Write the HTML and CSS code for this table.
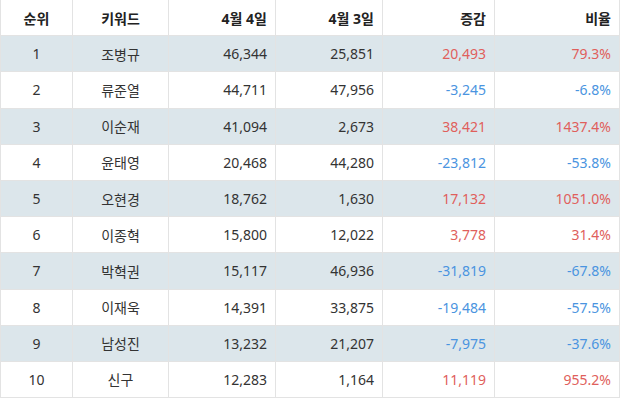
FILE: index.html
```html
<!DOCTYPE html>
<html lang="ko">
<head>
<meta charset="utf-8">
<link rel="stylesheet" href="styles.css">
</head>
<body>
<div class="table">
  <div class="row head">
    <div class="c c1">순위</div><div class="c c2">키워드</div><div class="c r">4월 4일</div><div class="c r">4월 3일</div><div class="c r">증감</div><div class="c r">비율</div>
  </div>
  <div class="row band">
    <div class="c c1">1</div><div class="c c2">조병규</div><div class="c r">46,344</div><div class="c r">25,851</div><div class="c r up">20,493</div><div class="c r up">79.3%</div>
  </div>
  <div class="row">
    <div class="c c1">2</div><div class="c c2">류준열</div><div class="c r">44,711</div><div class="c r">47,956</div><div class="c r down">-3,245</div><div class="c r down">-6.8%</div>
  </div>
  <div class="row band">
    <div class="c c1">3</div><div class="c c2">이순재</div><div class="c r">41,094</div><div class="c r">2,673</div><div class="c r up">38,421</div><div class="c r up">1437.4%</div>
  </div>
  <div class="row">
    <div class="c c1">4</div><div class="c c2">윤태영</div><div class="c r">20,468</div><div class="c r">44,280</div><div class="c r down">-23,812</div><div class="c r down">-53.8%</div>
  </div>
  <div class="row band">
    <div class="c c1">5</div><div class="c c2">오현경</div><div class="c r">18,762</div><div class="c r">1,630</div><div class="c r up">17,132</div><div class="c r up">1051.0%</div>
  </div>
  <div class="row">
    <div class="c c1">6</div><div class="c c2">이종혁</div><div class="c r">15,800</div><div class="c r">12,022</div><div class="c r up">3,778</div><div class="c r up">31.4%</div>
  </div>
  <div class="row band">
    <div class="c c1">7</div><div class="c c2">박혁권</div><div class="c r">15,117</div><div class="c r">46,936</div><div class="c r down">-31,819</div><div class="c r down">-67.8%</div>
  </div>
  <div class="row">
    <div class="c c1">8</div><div class="c c2">이재욱</div><div class="c r">14,391</div><div class="c r">33,875</div><div class="c r down">-19,484</div><div class="c r down">-57.5%</div>
  </div>
  <div class="row band">
    <div class="c c1">9</div><div class="c c2">남성진</div><div class="c r">13,232</div><div class="c r">21,207</div><div class="c r down">-7,975</div><div class="c r down">-37.6%</div>
  </div>
  <div class="row">
    <div class="c c1">10</div><div class="c c2">신구</div><div class="c r">12,283</div><div class="c r">1,164</div><div class="c r up">11,119</div><div class="c r up">955.2%</div>
  </div>
</div>
</body>
</html>
```
FILE: styles.css
```css
html, body {
  margin: 0;
  padding: 0;
  background: #ffffff;
}
body {
  font-family: "Noto Sans", "Noto Sans CJK KR", sans-serif;
  font-size: 14px;
  color: #333333;
}
.table {
  width: 620px;
  border-left: 1px solid #e3e3e3;
  border-right: 1px solid #e3e3e3;
  box-sizing: border-box;
}
.row {
  display: grid;
  grid-template-columns: 72px 96px 107px 107px 112px 1fr;
  height: 36.2px;
  box-sizing: border-box;
  border-bottom: 1px solid #e3e3e3;
}
.row.band {
  background: #dce6eb;
}
.head {
  font-weight: bold;
  color: #222222;
}
.c {
  display: flex;
  align-items: center;
  border-right: 1px solid #e3e3e3;
  padding: 0 8px;
  white-space: nowrap;
}
.c:last-child {
  border-right: none;
}
.c1, .c2 {
  justify-content: center;
}
.r {
  justify-content: flex-end;
}
.up {
  color: #e05f5c;
}
.down {
  color: #4a94e0;
}
```
